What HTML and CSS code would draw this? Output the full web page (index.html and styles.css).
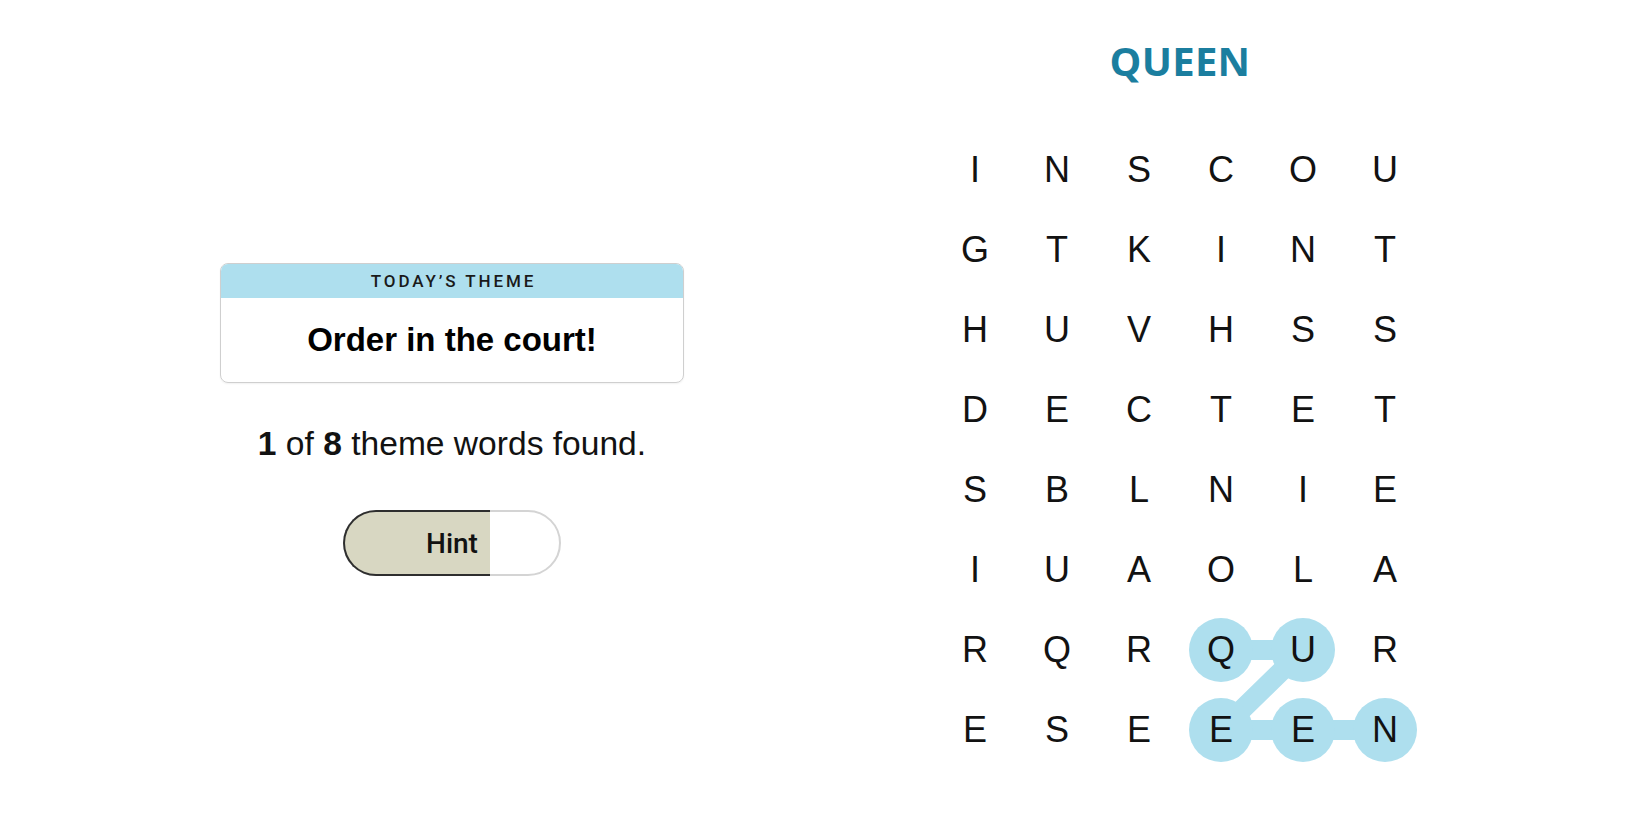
FILE: index.html
```html
<!DOCTYPE html>
<html lang="en">
<head>
<meta charset="utf-8">
<title>Strands</title>
<link rel="stylesheet" href="styles.css">
</head>
<body>
<main class="page">
  <section class="left">
    <div class="theme-card">
      <div class="theme-head">TODAY’S THEME</div>
      <div class="theme-body">Order in the court!</div>
    </div>
    <p class="progress"><b>1</b> of <b>8</b> theme words found.</p>
    <button class="hint" type="button">
      <span class="hint-fill"></span>
      <span class="hint-label">Hint</span>
    </button>
  </section>
  <section class="right">
    <h1 class="found-word">QUEEN</h1>
    <div class="board">
      <svg class="trail" width="492" height="640" viewBox="0 0 492 640" aria-hidden="true">
        <g stroke="#aedfee" stroke-width="20" stroke-linecap="round" fill="none">
          <polyline points="287,520 369,520 287,600 369,600 451,600"/>
        </g>
        <g fill="#aedfee">
          <circle cx="287" cy="520" r="32"/>
          <circle cx="369" cy="520" r="32"/>
          <circle cx="287" cy="600" r="32"/>
          <circle cx="369" cy="600" r="32"/>
          <circle cx="451" cy="600" r="32"/>
        </g>
      </svg>
      <div class="cell">I</div><div class="cell">N</div><div class="cell">S</div><div class="cell">C</div><div class="cell">O</div><div class="cell">U</div>
      <div class="cell">G</div><div class="cell">T</div><div class="cell">K</div><div class="cell">I</div><div class="cell">N</div><div class="cell">T</div>
      <div class="cell">H</div><div class="cell">U</div><div class="cell">V</div><div class="cell">H</div><div class="cell">S</div><div class="cell">S</div>
      <div class="cell">D</div><div class="cell">E</div><div class="cell">C</div><div class="cell">T</div><div class="cell">E</div><div class="cell">T</div>
      <div class="cell">S</div><div class="cell">B</div><div class="cell">L</div><div class="cell">N</div><div class="cell">I</div><div class="cell">E</div>
      <div class="cell">I</div><div class="cell">U</div><div class="cell">A</div><div class="cell">O</div><div class="cell">L</div><div class="cell">A</div>
      <div class="cell">R</div><div class="cell">Q</div><div class="cell">R</div><div class="cell">Q</div><div class="cell">U</div><div class="cell">R</div>
      <div class="cell">E</div><div class="cell">S</div><div class="cell">E</div><div class="cell">E</div><div class="cell">E</div><div class="cell">N</div>
    </div>
  </section>
</main>
</body>
</html>
```

FILE: styles.css
```css
* { box-sizing: border-box; }

html, body {
  margin: 0;
  padding: 0;
  background: #ffffff;
  color: #121212;
  font-family: "Liberation Sans", Arial, sans-serif;
}

.page {
  display: flex;
  align-items: flex-start;
  gap: 250px;
  padding-left: 220px;
  width: 1650px;
  height: 825px;
}

.left {
  width: 464px;
  padding-top: 263px;
  display: flex;
  flex-direction: column;
  align-items: center;
}

.theme-card {
  width: 464px;
  border: 1px solid #cfcfcf;
  border-radius: 8px;
  overflow: hidden;
  box-shadow: 0 1px 2px rgba(0, 0, 0, 0.06);
}

.theme-head {
  height: 34px;
  background: #aedfee;
  display: flex;
  align-items: center;
  justify-content: center;
  font-family: Roboto, "Liberation Sans", sans-serif;
  font-weight: 500;
  font-size: 17px;
  letter-spacing: 2.9px;
  color: #1a1a1a;
  padding-left: 3px;
}

.theme-body {
  height: 84px;
  display: flex;
  align-items: center;
  justify-content: center;
  font-weight: 700;
  font-size: 33px;
  color: #000;
}

.progress {
  margin: 41px 0 0;
  font-size: 33.6px;
  line-height: 40px;
  color: #121212;
}

.progress b { font-weight: 700; }

.hint {
  position: relative;
  margin-top: 46px;
  width: 218px;
  height: 66px;
  padding: 0;
  border: 2px solid #d4d4d4;
  border-radius: 33px;
  background: #ffffff;
  display: flex;
  align-items: center;
  justify-content: center;
  font-family: Roboto, "Liberation Sans", sans-serif;
  font-weight: 500;
  font-size: 28px;
  color: #121212;
  cursor: pointer;
}

.hint-fill {
  position: absolute;
  left: -2px;
  top: -2px;
  bottom: -2px;
  width: 147px;
  background: #d8d7c2;
  border: 2px solid #2e2e2e;
  border-right: 0;
  border-radius: 33px 0 0 33px;
}

.hint-label {
  position: relative;
  z-index: 1;
}

.right {
  width: 492px;
  display: flex;
  flex-direction: column;
  align-items: center;
}

.found-word {
  margin: 37px 0 0;
  height: 48px;
  font-family: "Open Sans", "Liberation Sans", sans-serif;
  font-weight: 700;
  font-size: 40px;
  line-height: 48px;
  color: #1b7e9f;
  letter-spacing: 0.3px;
}

.board {
  position: relative;
  margin-top: 45px;
  width: 492px;
  display: grid;
  grid-template-columns: repeat(6, 82px);
  grid-auto-rows: 80px;
}

.trail {
  position: absolute;
  left: 0;
  top: 0;
  z-index: 0;
}

.cell {
  position: relative;
  z-index: 1;
  display: flex;
  align-items: center;
  justify-content: center;
  font-size: 36px;
  line-height: 1;
  color: #121212;
}
```
